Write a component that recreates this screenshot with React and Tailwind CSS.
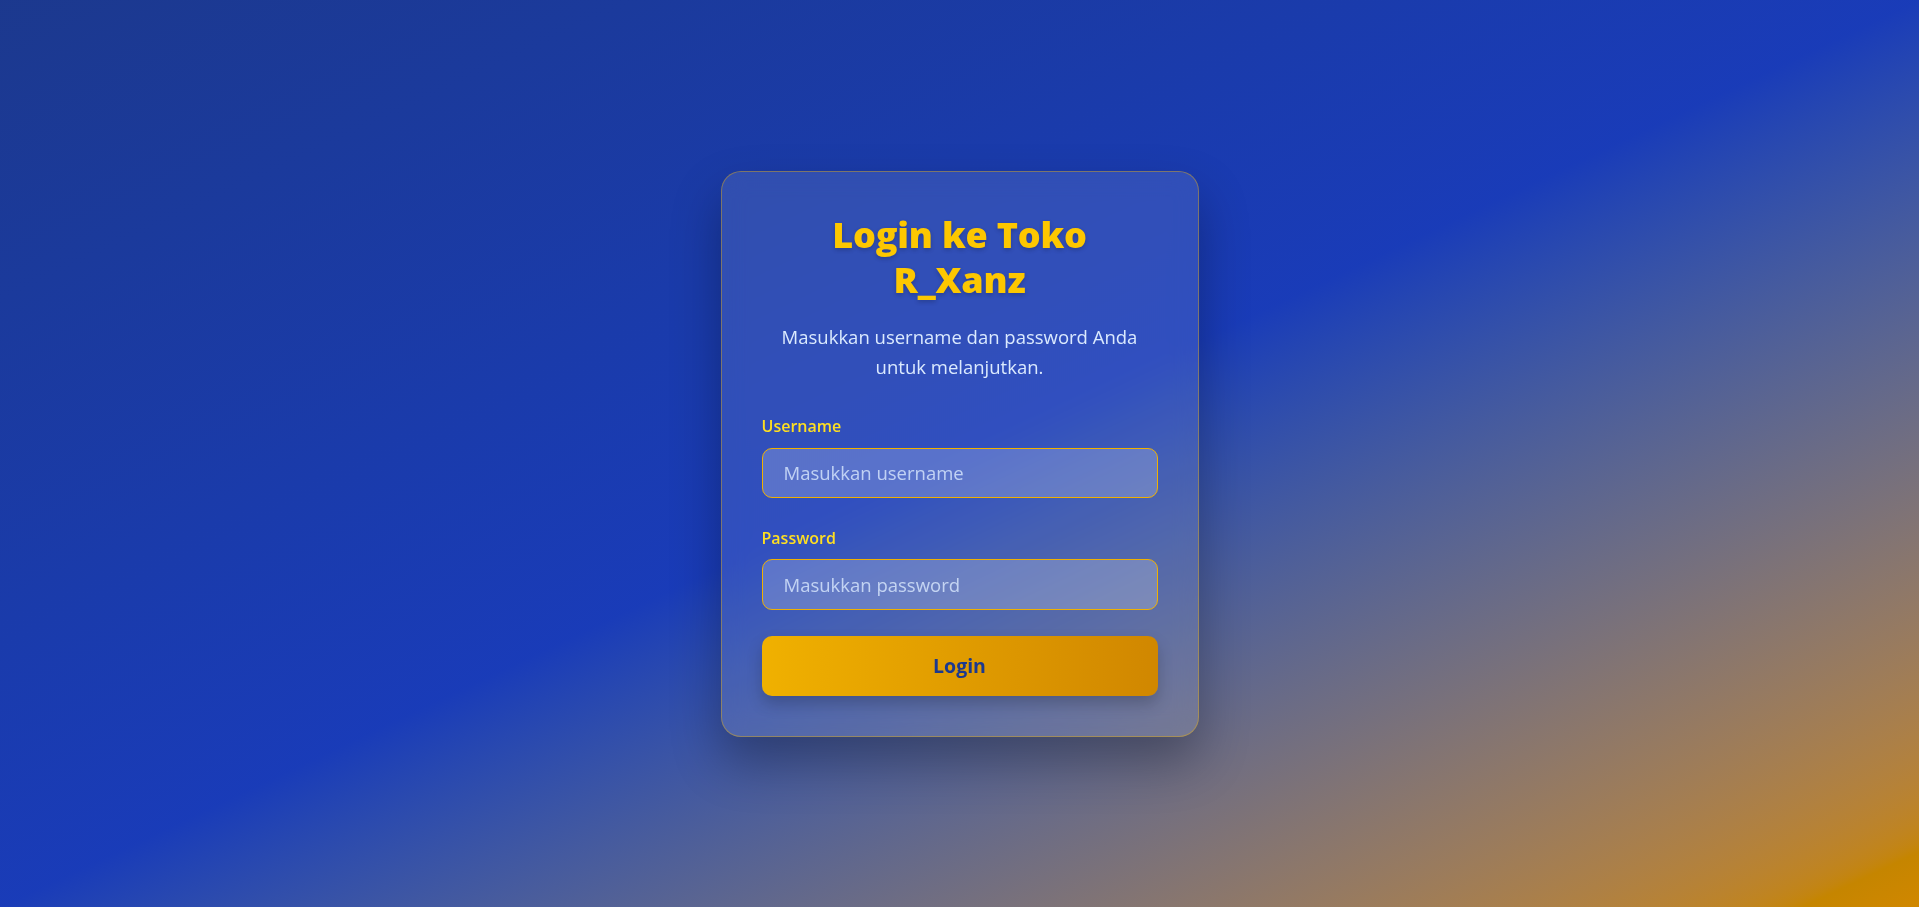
import { useState } from "react";

export default function App() {
  const [form, setForm] = useState({ username: "", password: "" });

  const handleSubmit = (e) => {
    e.preventDefault();
  };

  return (
    <div
      className="min-h-screen flex items-center justify-center bg-linear-to-br from-blue-900 via-blue-800 to-yellow-600"
      style={{ fontFamily: '"Open Sans", "Noto Sans", sans-serif' }}
    >
      <div className="w-[478px] rounded-[20px] border border-yellow-500/40 bg-white/10 backdrop-blur-md p-10 shadow-[0_25px_50px_rgba(0,0,0,0.3)]">
        <h1 className="text-center text-[36px] leading-[45px] font-extrabold tracking-[-0.2px] text-yellow-400 mb-5 px-8 [text-shadow:0_2px_4px_rgba(0,0,0,0.2)]">
          Login ke Toko R_Xanz
        </h1>
        <p className="text-center text-[18.5px] leading-[30px] text-blue-100 mb-8">
          Masukkan username dan password Anda untuk melanjutkan.
        </p>
        <form onSubmit={handleSubmit}>
          <label className="block text-[16px] leading-6 font-semibold text-yellow-300 mb-[10px]">
            Username
          </label>
          <input
            type="text"
            value={form.username}
            onChange={(e) => setForm({ ...form, username: e.target.value })}
            placeholder="Masukkan username"
            className="block w-full h-[50px] rounded-[10px] border border-yellow-500 bg-white/20 px-[21px] text-[18.5px] text-white placeholder:text-blue-100/80 focus:outline-none mb-7"
          />
          <label className="block text-[16px] leading-6 font-semibold text-yellow-300 mb-[9px]">
            Password
          </label>
          <input
            type="password"
            value={form.password}
            onChange={(e) => setForm({ ...form, password: e.target.value })}
            placeholder="Masukkan password"
            className="block w-full h-[51px] rounded-[10px] border border-yellow-500 bg-white/20 px-[21px] text-[18.5px] text-white placeholder:text-blue-100/80 focus:outline-none mb-[26px]"
          />
          <button
            type="submit"
            className="w-full h-[60px] rounded-[10px] bg-linear-to-r from-yellow-500 to-yellow-600 text-[19.5px] font-bold text-blue-900 shadow-[0_8px_16px_rgba(0,0,0,0.2)]"
          >
            Login
          </button>
        </form>
      </div>
    </div>
  );
}
